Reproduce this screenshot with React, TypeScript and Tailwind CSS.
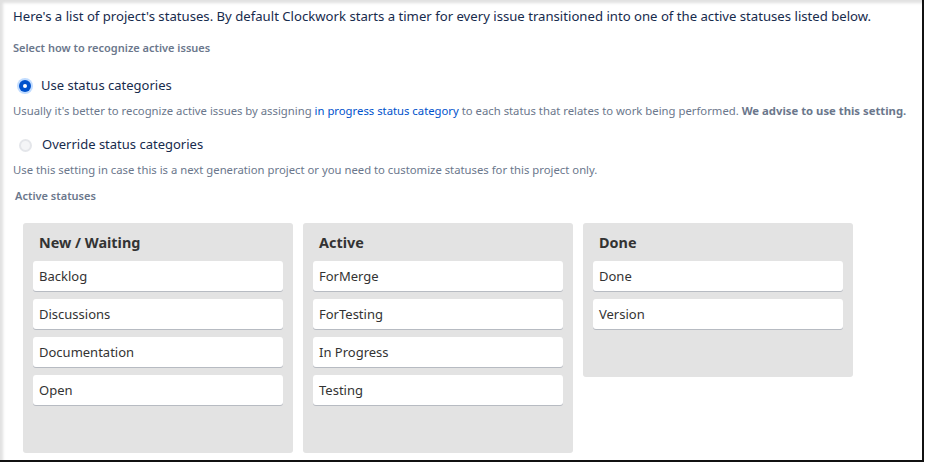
import React from 'react';

interface Column {
  title: string;
  statuses: string[];
}

const columns: Column[] = [
  { title: 'New / Waiting', statuses: ['Backlog', 'Discussions', 'Documentation', 'Open'] },
  { title: 'Active', statuses: ['ForMerge', 'ForTesting', 'In Progress', 'Testing'] },
  { title: 'Done', statuses: ['Done', 'Version'] },
];

const Radio: React.FC<{ checked: boolean; label: string }> = ({ checked, label }) => (
  <label className="flex items-center h-[20px] pl-[6px] gap-[10px] text-[13px] text-[#172b4d] cursor-pointer">
    {checked ? (
      <span className="w-[12px] h-[12px] rounded-full bg-[#0052cc] shadow-[0_0_0_2px_rgba(76,154,255,0.35)] flex items-center justify-center">
        <span className="w-[4px] h-[4px] rounded-full bg-white" />
      </span>
    ) : (
      <span className="w-[13px] h-[13px] rounded-full bg-[#f4f5f7] border-2 border-[#e4e6ea]" />
    )}
    {label}
  </label>
);

const App: React.FC = () => {
  return (
    <div className="w-[926px] h-[463px] bg-white" style={{ fontFamily: '"Noto Sans", "Open Sans", sans-serif' }}>
      <div className="w-[924px] h-[462px] border-r-2 border-b-2 border-[#111] shadow-[inset_3px_3px_3px_rgba(0,0,0,0.12)] pt-[6px] px-[13px] overflow-hidden">
        {/* Intro */}
        <p className="text-[13.15px] leading-[20px] text-[#172b4d] whitespace-nowrap">
          Here's a list of project's statuses. By default Clockwork starts a timer for every issue transitioned into one of the active statuses listed below.
        </p>
        <p className="mt-[14px] text-[11px] leading-[16px] font-semibold text-[#6b778c]">
          Select how to recognize active issues
        </p>

        {/* Options */}
        <div className="mt-[20px]">
          <Radio checked label="Use status categories" />
          <p className="mt-[7px] text-[11.3px] leading-[16px] text-[#6b778c] whitespace-nowrap">
            Usually it's better to recognize active issues by assigning{' '}
            <a className="text-[#0052cc]">in progress status category</a> to each status that relates to work being performed.{' '}
            <b className="font-bold">We advise to use this setting.</b>
          </p>
        </div>
        <div className="mt-[16px]">
          <Radio checked={false} label="Override status categories" />
          <p className="mt-[7px] text-[11.3px] leading-[16px] text-[#6b778c] whitespace-nowrap">
            Use this setting in case this is a next generation project or you need to customize statuses for this project only.
          </p>
        </div>

        <p className="mt-[10px] ml-[2px] text-[11px] leading-[16px] font-semibold text-[#6b778c]">Active statuses</p>

        {/* Status columns */}
        <div className="mt-[19px] ml-[10px] flex items-start gap-[10px]">
          {columns.map(col => (
            <div key={col.title} className="w-[270px] bg-[#e3e3e3] rounded-[3px] px-[10px] pt-[10px] pb-[48px]">
              <h3 className="px-[6px] text-[14.4px] leading-[20px] font-bold text-[#333]">{col.title}</h3>
              <div className="mt-[8px] flex flex-col gap-[8px]">
                {col.statuses.map(s => (
                  <div
                    key={s}
                    className="h-[30px] bg-white rounded-[3px] shadow-[0_1px_0_rgba(9,30,66,0.2)] px-[6px] pt-[1px] flex items-center text-[13px] text-[#333]"
                  >
                    {s}
                  </div>
                ))}
              </div>
            </div>
          ))}
        </div>
      </div>
    </div>
  );
};

export default App;
